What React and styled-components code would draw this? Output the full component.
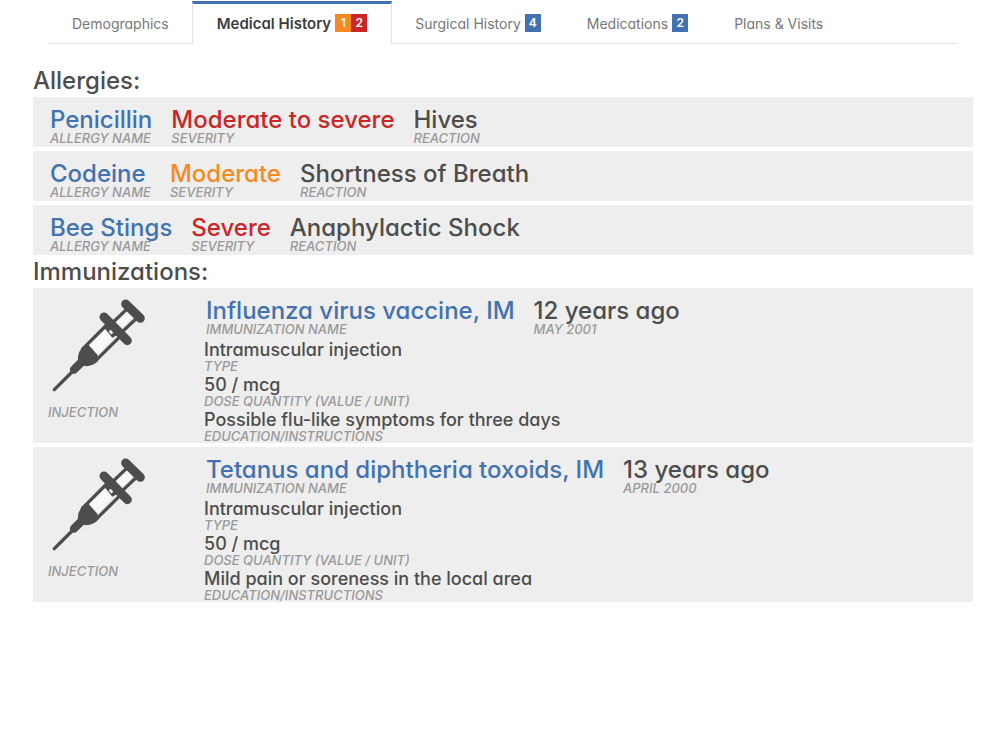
import React from 'react';
import styled, { createGlobalStyle } from 'styled-components';

const GlobalStyle = createGlobalStyle`
  body {
    margin: 0;
    background: #fff;
    color: #4d4d4b;
    font-family: Inter, "Liberation Sans", sans-serif;
    font-feature-settings: "cv11";
  }
`;

const Page = styled.div`
  padding: 1px 32px 0 33px;
`;

const Tabs = styled.nav`
  display: flex;
  margin: 0 16px 0 15px;
  border-bottom: 1px solid #e3e3e3;
`;

const Tab = styled.a`
  display: flex;
  align-items: center;
  gap: 4px;
  height: 36px;
  margin-bottom: -1px;
  padding: 1px ${(props) => (props.$active ? 24 : 22)}px 3px;
  border-top: 3px solid ${(props) => (props.$active ? '#4272b0' : 'transparent')};
  border-left: 1px solid ${(props) => (props.$active ? '#e3e3e3' : 'transparent')};
  border-right: 1px solid ${(props) => (props.$active ? '#e3e3e3' : 'transparent')};
  background: ${(props) => (props.$active ? '#fff' : 'none')};
  color: ${(props) => (props.$active ? '#3d3d3d' : '#777')};
  font-size: ${(props) => (props.$active ? 15 : 14)}px;
  font-weight: ${(props) => (props.$active ? 600 : 400)};
  text-decoration: none;
  white-space: nowrap;

  &:first-child {
    padding-left: 23px;
  }
`;

const Badges = styled.span`
  display: flex;
`;

const Badge = styled.span`
  width: 16px;
  background: ${(props) => props.$color};
  color: #fff;
  font-size: 12px;
  font-weight: 600;
  line-height: 18px;
  text-align: center;
`;

const Heading = styled.h2`
  margin: 0;
  padding: 3px 0 2px;
  font-size: 24px;
  font-weight: 500;
  line-height: 28px;
`;

const Allergies = styled.section`
  padding-top: 20px;
`;

const Panel = styled.div`
  display: flex;
  margin-bottom: 4px;
  background: #eee;

  &:last-child {
    margin-bottom: 0;
  }
`;

const AllergyRow = styled(Panel)`
  gap: 19px;
  padding: 11px 17px 3px;
`;

const Field = styled.div`
  white-space: nowrap;
`;

const Value = styled.div`
  color: ${(props) => props.$color || '#4d4d4b'};
  font-size: 24px;
  font-weight: 500;
  line-height: 24px;
`;

const Label = styled.div`
  color: #999;
  font-size: 13px;
  font-style: italic;
  font-weight: 500;
  line-height: 12px;
  text-transform: uppercase;
`;

const Picture = styled.div`
  width: 156px;
  padding: 11px 0 0 15px;
`;

const Syringe = styled.svg`
  display: block;
  width: 94px;
  height: 93px;
  margin: 0 0 14px 4px;
`;

const Details = styled.div`
  padding-bottom: 1px;
`;

const Summary = styled.div`
  display: flex;
  gap: 19px;
  padding: 11px 0 2px 2px;
`;

const Detail = styled.div`
  padding-top: 3px;
  font-size: 18px;
  font-weight: 500;
  line-height: 20px;
`;

const blue = '#4272b0';
const red = '#ca2628';
const orange = '#f6891f';

const tabs = [
  { name: 'Demographics', badges: [] },
  { name: 'Medical History', active: true, badges: [[1, orange], [2, red]] },
  { name: 'Surgical History', badges: [[4, blue]] },
  { name: 'Medications', badges: [[2, blue]] },
  { name: 'Plans & Visits', badges: [] },
];

const allergies = [
  { name: 'Penicillin', severity: 'Moderate to severe', color: red, reaction: 'Hives' },
  { name: 'Codeine', severity: 'Moderate', color: orange, reaction: 'Shortness of Breath' },
  { name: 'Bee Stings', severity: 'Severe', color: red, reaction: 'Anaphylactic Shock' },
];

const immunizations = [
  {
    name: 'Influenza virus vaccine, IM',
    age: '12 years ago',
    date: 'May 2001',
    type: 'Intramuscular injection',
    dose: '50 / mcg',
    notes: 'Possible flu-like symptoms for three days',
  },
  {
    name: 'Tetanus and diphtheria toxoids, IM',
    age: '13 years ago',
    date: 'April 2000',
    type: 'Intramuscular injection',
    dose: '50 / mcg',
    notes: 'Mild pain or soreness in the local area',
  },
];

const SyringeIcon = () => (
  <Syringe viewBox="66 116 282 279" aria-hidden="true" fill="none" stroke="#4d4d4b">
    {/* barrel and plunger */}
    <path d="M174 250L222 200L250 230L202 284Z" fill="#f8f8f8" stroke="none" />
    <path d="M258 182L290 152L308 170L278 200Z" fill="#f8f8f8" stroke="none" />
    <path d="M250 185L292 145M278 213L318 175M156 268L230 194M194 304L270 229" strokeWidth="10" />
    <path d="M221 200L240 182L272 218L247 232Z" fill="#4d4d4b" stroke="none" />
    <path d="M287 131L331 174M222 170L292 241" strokeWidth="27" strokeLinecap="round" />
    <path d="M239 211L247 220" stroke="#f8f8f8" strokeWidth="8" />
    {/* liquid, hub and needle */}
    <path d="M174 252L202 283L206 299Q192 317 168 318Q150 314 144 300Q142 282 153 266Z" fill="#4d4d4b" stroke="none" />
    <path d="M132 328L152 308" strokeWidth="25" strokeLinecap="round" />
    <path d="M73 388L135 326" strokeWidth="10" strokeLinecap="round" />
  </Syringe>
);

const Item = ({ value, label, color }) => (
  <Field>
    <Value $color={color}>{value}</Value>
    <Label>{label}</Label>
  </Field>
);

const App = () => {
  return (
    <>
      <GlobalStyle />
      <Page>
        <Tabs>
          {tabs.map((tab) => (
            <Tab key={tab.name} href="#" $active={tab.active}>
              {tab.name}
              {tab.badges.length > 0 && (
                <Badges>
                  {tab.badges.map(([count, color]) => (
                    <Badge key={color} $color={color}>{count}</Badge>
                  ))}
                </Badges>
              )}
            </Tab>
          ))}
        </Tabs>

        <Allergies>
          <Heading>Allergies:</Heading>
          {allergies.map((allergy) => (
            <AllergyRow key={allergy.name}>
              <Item value={allergy.name} label="Allergy name" color={blue} />
              <Item value={allergy.severity} label="Severity" color={allergy.color} />
              <Item value={allergy.reaction} label="Reaction" />
            </AllergyRow>
          ))}
        </Allergies>

        <section>
          <Heading>Immunizations:</Heading>
          {immunizations.map((shot) => (
            <Panel key={shot.name}>
              <Picture>
                <SyringeIcon />
                <Label>Injection</Label>
              </Picture>
              <Details>
                <Summary>
                  <Item value={shot.name} label="Immunization name" color={blue} />
                  <Item value={shot.age} label={shot.date} />
                </Summary>
                <Detail>{shot.type}</Detail>
                <Label>Type</Label>
                <Detail>{shot.dose}</Detail>
                <Label>Dose quantity (value / unit)</Label>
                <Detail>{shot.notes}</Detail>
                <Label>Education/Instructions</Label>
              </Details>
            </Panel>
          ))}
        </section>
      </Page>
    </>
  );
};

export default App;
